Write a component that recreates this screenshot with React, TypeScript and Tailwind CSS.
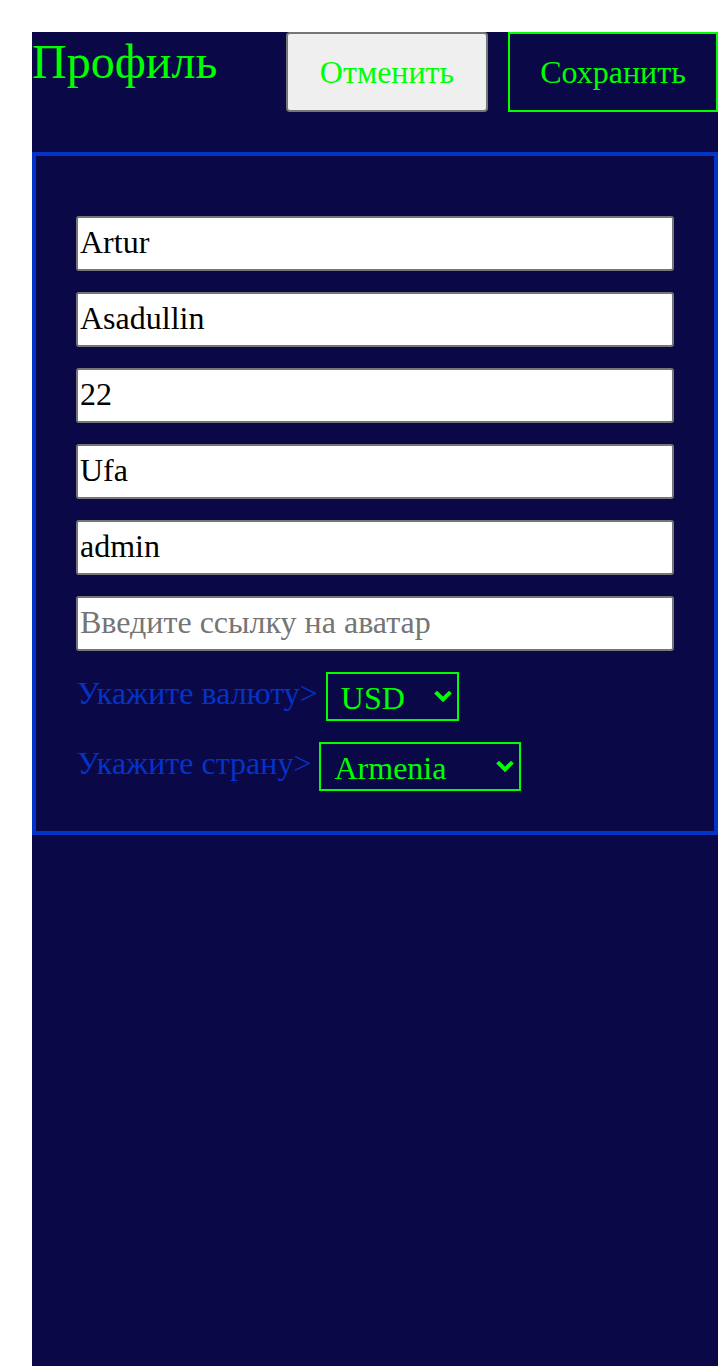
import React from "react";

const Chevron = () => (
  <svg
    className="pointer-events-none absolute right-[7px] top-1/2 -translate-y-1/2"
    width="18"
    height="13"
    viewBox="0 0 18 13"
    fill="none"
  >
    <polyline
      points="3,3 9,9 15,3"
      stroke="#00ff00"
      strokeWidth="4"
      strokeLinecap="square"
      strokeLinejoin="miter"
    />
  </svg>
);

export default function App() {
  return (
    <div className="min-h-screen bg-white pl-8 pt-8 flex font-['Liberation_Serif',serif]">
      <div className="flex-1 bg-[#0a0846] flex flex-col">
        <header className="flex items-start justify-between">
          <h1 className="text-[48px] leading-[1.15] pt-[2px] text-[#00ff00]">Профиль</h1>
          <div className="flex gap-5">
            <button className="h-20 w-[202px] rounded-[4px] border-2 border-[#767676] bg-[#efefef] text-[32px] text-[#00ff00]">
              Отменить
            </button>
            <button className="h-20 w-[210px] border-2 border-[#00ff00] bg-transparent text-[32px] text-[#00ff00]">
              Сохранить
            </button>
          </div>
        </header>

        <section className="mt-10 border-4 border-[#0433c8] px-10 pt-[60px] pb-10 flex flex-col gap-[21px]">
          {["Artur", "Asadullin", "22", "Ufa", "admin"].map((v) => (
            <input
              key={v}
              defaultValue={v}
              className="h-[55px] w-full rounded-[3px] border-2 border-[#767676] bg-white px-[2px] pb-[3px] text-[32px] text-black outline-none"
            />
          ))}
          <input
            placeholder="Введите ссылку на аватар"
            className="h-[55px] w-full rounded-[3px] border-2 border-[#767676] bg-white px-[2px] pb-[3px] text-[32px] text-black placeholder:text-[#757575] outline-none"
          />

          <div className="flex h-[49px] items-center gap-2">
            <span className="pl-px mb-[6px] text-[32px] leading-[37px] text-[#0433c8]">Укажите валюту&gt;</span>
            <div className="relative">
              <select
                defaultValue="USD"
                className="h-[49px] w-[133px] appearance-none border-2 border-[#00ff00] bg-transparent pl-[13px] pb-[3px] text-[32px] text-[#00ff00] outline-none"
              >
                <option className="bg-[#0a0846]">USD</option>
                <option className="bg-[#0a0846]">EUR</option>
                <option className="bg-[#0a0846]">RUB</option>
              </select>
              <Chevron />
            </div>
          </div>

          <div className="flex h-[49px] items-center gap-2">
            <span className="pl-px mb-[6px] text-[32px] leading-[37px] text-[#0433c8]">Укажите страну&gt;</span>
            <div className="relative">
              <select
                defaultValue="Armenia"
                className="h-[49px] w-[202px] appearance-none border-2 border-[#00ff00] bg-transparent pl-[13px] pb-[3px] text-[32px] text-[#00ff00] outline-none"
              >
                <option className="bg-[#0a0846]">Armenia</option>
                <option className="bg-[#0a0846]">Russia</option>
                <option className="bg-[#0a0846]">Belarus</option>
                <option className="bg-[#0a0846]">Kazakhstan</option>
                <option className="bg-[#0a0846]">Ukraine</option>
              </select>
              <Chevron />
            </div>
          </div>
        </section>
      </div>
    </div>
  );
}
